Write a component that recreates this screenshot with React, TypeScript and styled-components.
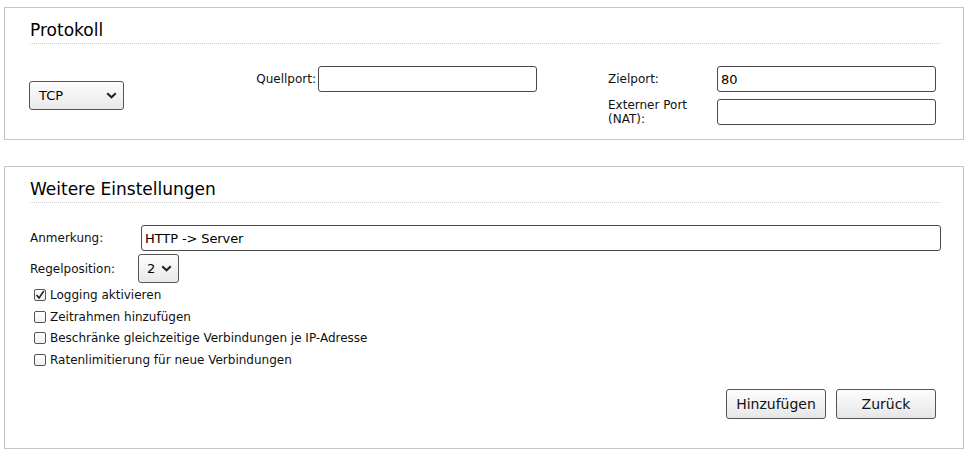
import React from 'react';
import styled, { createGlobalStyle } from 'styled-components';

const Global = createGlobalStyle`
  html, body { margin: 0; padding: 0; background: #fff; }
  body {
    font-family: "DejaVu Sans", Verdana, sans-serif;
    font-size: 12px;
    color: #111;
  }
  * { box-sizing: border-box; }
`;

const Page = styled.div`
  width: 964px;
  padding: 7px 0 0 4px;
  display: flex;
  flex-direction: column;
  gap: 26px;
`;

const Panel = styled.section<{ $h: number }>`
  height: ${(p) => p.$h}px;
  border: 1px solid #c4c4c4;
  padding: 12px 22px 0 25px;
  display: flex;
  flex-direction: column;
`;

const Heading = styled.h2`
  margin: 0 0 22px;
  font-size: 17px;
  line-height: 20px;
  font-weight: normal;
  color: #000;
  padding-bottom: 3px;
  border-bottom: 1px dotted #cfcfcf;
`;

const ProtoRow = styled.div`
  display: flex;
  align-items: flex-start;
`;

const ProtoCol = styled.div`
  width: 226px;
  height: 58px;
  margin-left: -1px;
  display: flex;
  align-items: center;
`;

const QuellGroup = styled.div`
  width: 282px;
  display: flex;
  justify-content: flex-end;
  align-items: center;
  gap: 2px;
`;

const PortGrid = styled.div`
  margin-left: 71px;
  display: grid;
  grid-template-columns: 109px 218px;
  row-gap: 6px;
  align-items: center;
`;

const Label = styled.label`
  font-size: 12px;
  line-height: 14px;
  color: #111;
`;

const TextInput = styled.input<{ $w: number }>`
  width: ${(p) => p.$w}px;
  height: 26px;
  border: 1px solid #4a4a4a;
  border-radius: 3px;
  padding: 0 3px;
  font-family: "DejaVu Sans", Verdana, sans-serif;
  font-size: 13px;
  letter-spacing: -0.1px;
  color: #000;
  background: #fff;
  outline: none;
`;

const SelectBox = styled.div<{ $w: number; $pl: number }>`
  width: ${(p) => p.$w}px;
  height: 29px;
  border: 1px solid #555;
  border-radius: 3px;
  background: linear-gradient(#fdfdfd, #e9e9e9);
  display: flex;
  align-items: center;
  justify-content: space-between;
  padding: 0 6px 0 ${(p) => p.$pl}px;
  font-size: 13px;
  color: #000;
`;

const Chevron = () => (
  <svg width="11" height="7" viewBox="0 0 11 7">
    <path d="M1.2 1.2 L5.5 5.3 L9.8 1.2" fill="none" stroke="#222" strokeWidth="2" />
  </svg>
);

const FormRow = styled.div<{ $mt?: number }>`
  display: flex;
  align-items: center;
  margin-top: ${(p) => p.$mt ?? 0}px;
`;

const RowLabel = styled(Label)<{ $w: number }>`
  width: ${(p) => p.$w}px;
  flex: none;
`;

const Checks = styled.div`
  margin-top: 1px;
  display: flex;
  flex-direction: column;
`;

const CheckRow = styled.label`
  height: 21.8px;
  display: flex;
  align-items: center;
  gap: 4px;
  padding-left: 4px;
  font-size: 12px;
  color: #111;
`;

const Box = styled.span`
  width: 12px;
  height: 12px;
  border: 1px solid #555;
  border-radius: 2px;
  background: linear-gradient(#fff, #f0f0f0);
  display: flex;
  align-items: center;
  justify-content: center;
`;

const Buttons = styled.div`
  margin-top: auto;
  margin-bottom: 29px;
  margin-right: 5px;
  display: flex;
  justify-content: flex-end;
  gap: 10px;
`;

const Button = styled.button`
  width: 100px;
  height: 30px;
  border: 1px solid #555;
  border-radius: 3px;
  background: linear-gradient(#fdfdfd, #e6e6e6);
  font-family: "DejaVu Sans", Verdana, sans-serif;
  font-size: 14px;
  color: #111;
  padding: 0;
`;

const Check = ({ checked, children }: { checked?: boolean; children: React.ReactNode }) => (
  <CheckRow>
    <Box>
      {checked && (
        <svg width="10" height="10" viewBox="0 0 10 10">
          <path d="M1.5 5 L4 8 L8.8 1" fill="none" stroke="#222" strokeWidth="1.6" />
        </svg>
      )}
    </Box>
    {children}
  </CheckRow>
);

export default function App() {
  return (
    <>
      <Global />
      <Page>
        <Panel $h={133}>
          <Heading>Protokoll</Heading>
          <ProtoRow>
            <ProtoCol>
              <SelectBox $w={95} $pl={9}>
                TCP
                <Chevron />
              </SelectBox>
            </ProtoCol>
            <QuellGroup>
              <Label>Quellport:</Label>
              <TextInput $w={219} defaultValue="" />
            </QuellGroup>
            <PortGrid>
              <Label>Zielport:</Label>
              <TextInput $w={219} defaultValue="80" />
              <Label>
                Externer Port
                <br />
                (NAT):
              </Label>
              <TextInput $w={219} defaultValue="" />
            </PortGrid>
          </ProtoRow>
        </Panel>
        <Panel $h={283}>
          <Heading>Weitere Einstellungen</Heading>
          <FormRow>
            <RowLabel $w={111}>Anmerkung:</RowLabel>
            <TextInput $w={800} defaultValue="HTTP -> Server" />
          </FormRow>
          <FormRow $mt={3}>
            <RowLabel $w={108}>Regelposition:</RowLabel>
            <SelectBox $w={41} $pl={8}>
              2
              <Chevron />
            </SelectBox>
          </FormRow>
          <Checks>
            <Check checked>Logging aktivieren</Check>
            <Check>Zeitrahmen hinzufügen</Check>
            <Check>Beschränke gleichzeitige Verbindungen je IP-Adresse</Check>
            <Check>Ratenlimitierung für neue Verbindungen</Check>
          </Checks>
          <Buttons>
            <Button>Hinzufügen</Button>
            <Button>Zurück</Button>
          </Buttons>
        </Panel>
      </Page>
    </>
  );
}
